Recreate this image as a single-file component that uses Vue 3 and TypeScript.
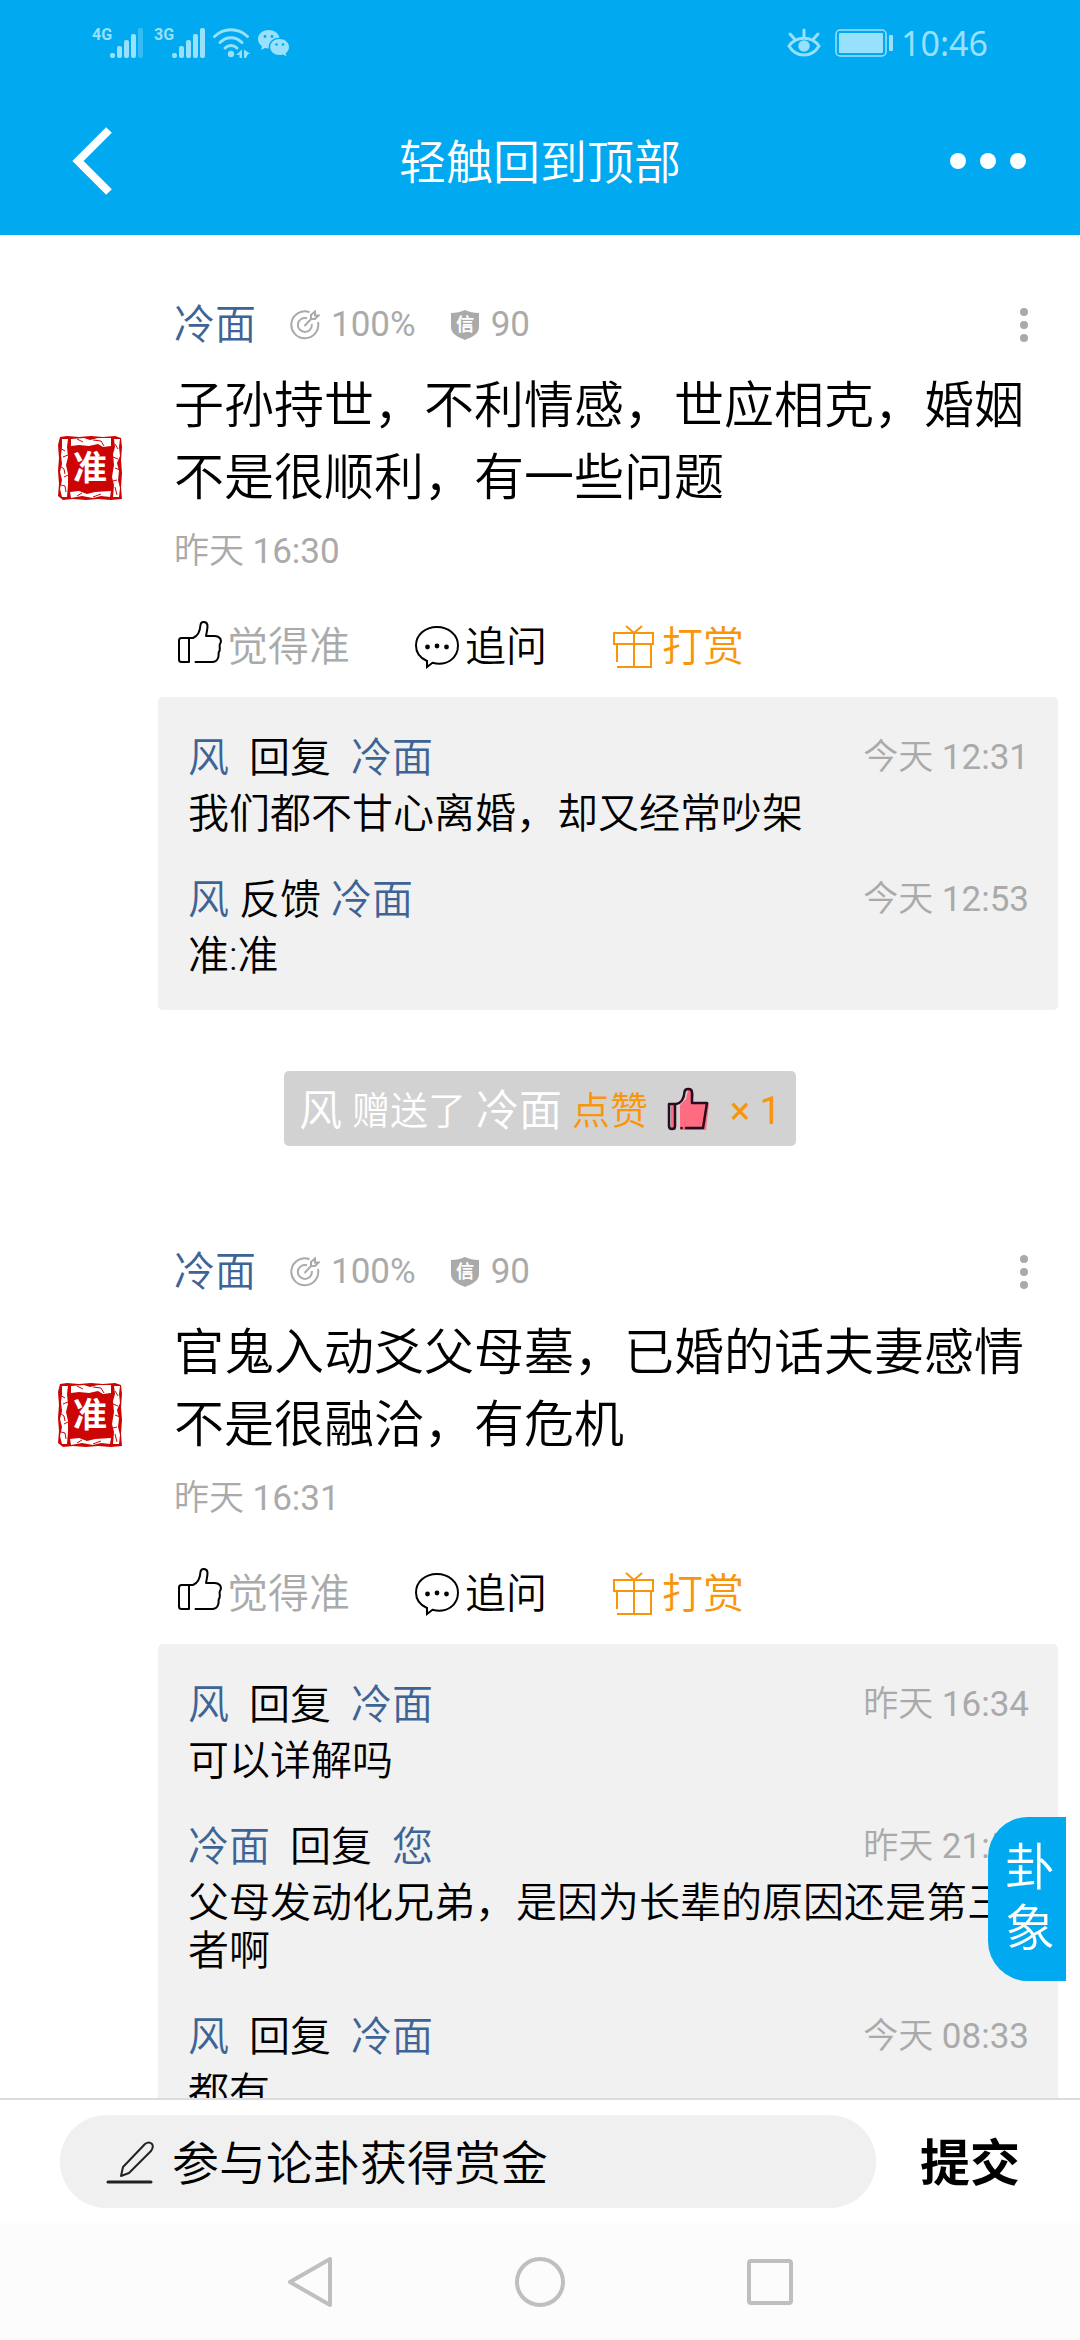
<script setup lang="ts">
import { ref } from 'vue'

interface Moment {
  day: string
  clock: string
}

interface Reply {
  from: string
  verb: string
  to: string
  time: Moment
  text: string
  tight?: boolean
}

interface Post {
  id: number
  author: string
  accuracy: string
  credit: number
  body: string
  time: Moment
  replies: Reply[]
  gift?: { from: string; to: string; name: string; count: number }
}

const today = (clock: string): Moment => ({ day: '今天', clock })
const yesterday = (clock: string): Moment => ({ day: '昨天', clock })

const posts: Post[] = [
  {
    id: 1,
    author: '冷面',
    accuracy: '100%',
    credit: 90,
    body: '子孙持世，不利情感，世应相克，婚姻不是很顺利，有一些问题',
    time: yesterday('16:30'),
    replies: [
      { from: '风', verb: '回复', to: '冷面', time: today('12:31'), text: '我们都不甘心离婚，却又经常吵架' },
      { from: '风', verb: '反馈', to: '冷面', time: today('12:53'), text: '准:准', tight: true },
    ],
    gift: { from: '风', to: '冷面', name: '点赞', count: 1 },
  },
  {
    id: 2,
    author: '冷面',
    accuracy: '100%',
    credit: 90,
    body: '官鬼入动爻父母墓，已婚的话夫妻感情不是很融洽，有危机',
    time: yesterday('16:31'),
    replies: [
      { from: '风', verb: '回复', to: '冷面', time: yesterday('16:34'), text: '可以详解吗' },
      { from: '冷面', verb: '回复', to: '您', time: yesterday('21:54'), text: '父母发动化兄弟，是因为长辈的原因还是第三者啊' },
      { from: '风', verb: '回复', to: '冷面', time: today('08:33'), text: '都有' },
    ],
  },
]

const draft = ref('')
const feed = ref<HTMLElement | null>(null)

function backToTop() {
  feed.value?.scrollTo({ top: 0, behavior: 'smooth' })
}
</script>

<template>
  <div class="app">
    <header class="top">
      <div class="status">
        <div class="status-left">
          <span class="net">4G</span>
          <svg class="bars" width="34" height="32" viewBox="0 0 34 32" aria-hidden="true">
            <rect x="0" y="26" width="5" height="5" rx="2" />
            <rect x="7" y="19" width="5" height="12" rx="2" />
            <rect x="14" y="13" width="5" height="18" rx="2" />
            <rect x="21" y="7" width="5" height="24" rx="2" />
            <rect x="28" y="1" width="5" height="30" rx="2" opacity=".35" />
          </svg>
          <span class="net second">3G</span>
          <svg class="bars" width="34" height="32" viewBox="0 0 34 32" aria-hidden="true">
            <rect x="0" y="26" width="5" height="5" rx="2" />
            <rect x="7" y="19" width="5" height="12" rx="2" />
            <rect x="14" y="13" width="5" height="18" rx="2" />
            <rect x="21" y="7" width="5" height="24" rx="2" />
            <rect x="28" y="1" width="5" height="30" rx="2" />
          </svg>
          <svg class="wifi" width="40" height="32" viewBox="0 0 40 32" aria-hidden="true">
            <g fill="none" stroke="currentColor" stroke-width="3" stroke-linecap="round">
              <path d="M2.500 9.500C12 .5 26 .5 35.500 9.500" />
              <path d="M8 15.500C14.500 9 23.500 9 30 15.500" />
              <path d="M13 21C16.500 17.500 21.500 17.500 25 21" />
            </g>
            <circle cx="19" cy="27" r="3.200" />
            <path d="M30 22.500v8.500h-2.500v-3h-3.500zM32 22.500l6.500 4.500h-2.500l-2 4H32z" />
          </svg>
          <svg class="wechat" width="33" height="28" viewBox="0 0 33 28" aria-hidden="true">
            <path d="M11.500 1C5.500 1 1 5 1 10c0 3 1.500 5.500 4 7.200L4 21l4-2c1.200.3 2.500.5 3.800.5C11 13 16 8.500 22.500 8.700 21.500 4 17 1 11.500 1z" />
            <path d="M22.500 10c-5.300 0-9.300 3.500-9.300 8s4 8 9.300 8c1.200 0 2.400-.2 3.500-.6l3.500 1.800-.9-3c2.200-1.500 3.400-3.700 3.400-6.200 0-4.500-4.200-8-9.500-8z" />
            <g fill="#00a9f0">
              <circle cx="8" cy="7.500" r="1.400" /><circle cx="15" cy="7.500" r="1.400" />
              <circle cx="19.500" cy="15.500" r="1.300" /><circle cx="26" cy="15.500" r="1.300" />
            </g>
          </svg>
        </div>
        <div class="status-right">
          <svg width="34" height="32" viewBox="0 0 34 32" aria-hidden="true">
            <g fill="none" stroke="currentColor" stroke-width="3" stroke-linecap="round">
              <path d="M2 19C9 8.500 25 8.500 32 19 25 31 9 31 2 19z" />
              <path d="M17 10V3M7.500 12 3 7M26.500 12 31 7" />
            </g>
            <circle cx="17" cy="19" r="5.800" />
          </svg>
          <svg class="battery" width="58" height="28" viewBox="0 0 58 28" aria-hidden="true">
            <rect x="1" y="1" width="50" height="26" rx="4" fill="none" stroke="currentColor" stroke-width="1.500" />
            <rect x="4" y="4" width="44" height="20" rx="1" />
            <rect x="54" y="6" width="4" height="16" rx="1" />
          </svg>
          <span class="clock">10:46</span>
        </div>
      </div>
      <nav class="titlebar">
        <button class="plain" type="button" aria-label="返回">
          <svg width="42" height="68" viewBox="0 0 42 68" aria-hidden="true">
            <path d="M37 3 6 34 37 65" fill="none" stroke="#fff" stroke-width="8" />
          </svg>
        </button>
        <button class="plain title" type="button" @click="backToTop">轻触回到顶部</button>
        <button class="plain end" type="button" aria-label="更多">
          <svg width="78" height="18" viewBox="0 0 78 18" fill="#fff" aria-hidden="true">
            <circle cx="9" cy="9" r="8" /><circle cx="39" cy="9" r="8" /><circle cx="69" cy="9" r="8" />
          </svg>
        </button>
      </nav>
    </header>

    <div class="stage">
      <main ref="feed" class="feed">
        <article v-for="post in posts" :key="post.id" class="post">
          <div class="entry">
            <svg class="seal" width="66" height="66" viewBox="0 0 66 66" aria-hidden="true">
              <path fill="#cc0404" d="M3 2 10 1 22 2 34 1 46 2 58 1 64 3 65 12 64 25 65 38 64 52 65 64 54 65 41 64 29 65 16 64 6 65 1 61 2 49 1 36 2 23 1 10z" />
              <g fill="#fff">
                <path d="M14 4 27 3 33 5 41 3 54 3 54 11 46 12 41 9 32 11 22 10 14 11z" />
                <path d="M13 57 22 56 30 59 38 57 54 56 53 62 44 61 36 63 25 61 14 63z" />
                <path d="M5 4 11 4 10 12 11 22 9 30 11 39 11 50 10 62 5 62 3 54 5 45 3 37 5 29 4 20 5 12z" />
                <path d="M57 4 63 4 62 12 63 21 60 28 62 36 61 45 63 53 62 62 56 62 57 50 55 42 57 30 56 19 58 12z" />
              </g>
              <g fill="none" stroke="#cc0404" stroke-width="1">
                <path d="M3 13l5 3M6 22l5-2M3 31l4 3 1 5M7 42l4-2M4 50l4 1 1 6M58 9l3 5M56 22l5 2M58 33l5 2M56 46l4-1M58 52l2 8M20 4l6 3M36 5l8 1 3 5M20 61l5-3M36 62l8-3" />
              </g>
              <text x="33" y="45" text-anchor="middle" class="seal-char">准</text>
            </svg>
            <div class="content">
              <div class="meta">
                <a class="name" href="#">{{ post.author }}</a>
                <span class="stat">
                  <svg width="30" height="30" viewBox="0 0 30 30" fill="none" stroke="currentColor" stroke-width="2" aria-hidden="true">
                    <path d="M19.500 2.200A13.500 13.500 0 1 0 28 12" />
                    <path d="M17 8.300A7 7 0 1 0 21.800 14" />
                    <path d="M14.500 16 22 8M21 9V5l4-3.500V5.500H28.500L25 9z" />
                  </svg>
                  {{ post.accuracy }}
                </span>
                <span class="stat">
                  <svg width="30" height="30" viewBox="0 0 30 30" aria-hidden="true">
                    <path fill="currentColor" d="M1 3C6 3 11 2 15 0c4 2 9 3 14 3v14c0 7-7 10-14 13C8 27 1 24 1 17z" />
                    <text x="15" y="21" text-anchor="middle" class="shield-char">信</text>
                  </svg>
                  {{ post.credit }}
                </span>
                <button class="plain more" type="button" aria-label="更多操作">
                  <svg width="8" height="34" viewBox="0 0 8 34" fill="#aaa" aria-hidden="true">
                    <circle cx="4" cy="4" r="4" /><circle cx="4" cy="17" r="4" /><circle cx="4" cy="30" r="4" />
                  </svg>
                </button>
              </div>
              <p class="body">{{ post.body }}</p>
              <time class="time">{{ post.time.day }} <span>{{ post.time.clock }}</span></time>
              <div class="actions">
                <button class="plain act muted" type="button">
                  <svg width="46" height="54" viewBox="0 0 46 54" fill="none" stroke="#000" stroke-width="2" stroke-linecap="round" stroke-linejoin="round" aria-hidden="true">
                    <path d="M13 18H5.500Q3 18 3 20.500V39.500Q3 42 5.500 42H13z" />
                    <path d="M13 18H17C22 16 24 12 24.500 5 25 .5 31.500 1 31.500 6 31.500 10 30.500 13 30 16H38.500C43 16 46 19 44.500 23 42.500 25 44.500 27 43.500 31 41.500 33 43.500 35 42 38 41 41 38.500 42 36 42H19.500" />
                  </svg>
                  觉得准
                </button>
                <button class="plain act" type="button">
                  <svg width="46" height="44" viewBox="0 0 46 44" aria-hidden="true">
                    <path d="M13 36V42L18.500 37.800C33 41.500 44 33 44 20.500 44 10 34.500 2 23 2 11 2 2 10 2 20.500 2 27.500 6 33 13 36z" fill="none" stroke="#000" stroke-width="2" />
                    <circle cx="13.500" cy="22" r="2.400" /><circle cx="23" cy="21" r="2.400" /><circle cx="32.500" cy="22" r="2.400" />
                  </svg>
                  追问
                </button>
                <button class="plain act reward" type="button">
                  <svg width="46" height="44" viewBox="0 0 46 44" fill="none" stroke="currentColor" stroke-width="2" aria-hidden="true">
                    <path d="M3 8H42V19H3zM6 19V37M6 42H40V19M23 8V42M15 1l8 7 8-7" />
                  </svg>
                  打赏
                </button>
              </div>
            </div>
          </div>

          <section class="replies">
            <div v-for="(reply, i) in post.replies" :key="i" class="reply">
              <div class="reply-head">
                <span class="who" :class="{ tight: reply.tight }">
                  <a href="#">{{ reply.from }}</a>
                  <span>{{ reply.verb }}</span>
                  <a href="#">{{ reply.to }}</a>
                </span>
                <time class="reply-time">{{ reply.time.day }} <span>{{ reply.time.clock }}</span></time>
              </div>
              <p class="reply-text">{{ reply.text }}</p>
            </div>
          </section>

          <div v-if="post.gift" class="gift">
            <strong>{{ post.gift.from }}</strong>
            <span>赠送了</span>
            <strong>{{ post.gift.to }}</strong>
            <em>{{ post.gift.name }}</em>
            <svg class="gift-thumb" width="44" height="44" viewBox="0 0 44 44" aria-hidden="true">
              <path fill="#ff6b81" d="M14 18 20 12 22 3 26 2 28 8 26 16H43L40 43H14zM5 17h5v26H5z" />
              <g fill="none" stroke="#280c20" stroke-width="2.500" stroke-linejoin="round" stroke-linecap="round">
                <path d="M3 17H9V39Q9 42 6 42 3 42 3 39z" />
                <path d="M10 17C16 16 18 12 18.500 5 19 1 26 1 26 5.500V16H41L37 41H20M15.500 41h.1" />
              </g>
            </svg>
            <em class="count">× {{ post.gift.count }}</em>
          </div>
        </article>
      </main>
      <button class="plain chart" type="button"><span>卦</span><span>象</span></button>
    </div>

    <form class="composer" @submit.prevent="draft = ''">
      <label class="field">
        <svg width="48" height="44" viewBox="0 0 48 44" fill="none" stroke="#222" stroke-width="2" stroke-linecap="round" aria-hidden="true">
          <path d="M15 36 17 27 39 4Q43 1 46 4 48 7 45 11L23 33z" stroke-linejoin="round" />
          <path d="M2 42H45" stroke-width="3" />
        </svg>
        <input v-model="draft" type="text" placeholder="参与论卦获得赏金" aria-label="参与论卦获得赏金" />
      </label>
      <button class="plain submit" type="submit">提交</button>
    </form>

    <nav class="system">
      <button class="plain" type="button" aria-label="后退">
        <svg width="50" height="54" viewBox="0 0 50 54" aria-hidden="true"><path d="M45 4V50L5 27z" /></svg>
      </button>
      <button class="plain" type="button" aria-label="主页">
        <svg width="54" height="54" viewBox="0 0 54 54" aria-hidden="true"><circle cx="27" cy="27" r="23" /></svg>
      </button>
      <button class="plain" type="button" aria-label="最近任务">
        <svg width="50" height="50" viewBox="0 0 50 50" aria-hidden="true"><rect x="4" y="4" width="42" height="42" rx="2" /></svg>
      </button>
    </nav>
  </div>
</template>

<style>
body {
  margin: 0;
  background: #fff;
}
</style>

<style scoped>
.app {
  display: flex;
  flex-direction: column;
  height: 100vh;
  font-family: Roboto, "Noto Sans CJK SC", sans-serif;
  font-size: 41px;
  font-weight: 350;
  line-height: 48px;
  color: #000;
}

.plain {
  display: flex;
  align-items: center;
  padding: 0;
  border: 0;
  background: none;
  font: inherit;
  color: inherit;
}

svg {
  display: block;
  flex: none;
}

a {
  color: #3e6496;
  text-decoration: none;
}

p {
  margin: 0;
}

.top {
  background: #00a9f0;
}

.status {
  display: flex;
  justify-content: space-between;
  align-items: center;
  height: 86px;
  padding: 0 92px;
  color: #98e0fb;
}

.status svg {
  fill: currentColor;
}

.status-left,
.status-right {
  display: flex;
  align-items: center;
}

.battery {
  margin: 0 8px 0 14px;
}

.net {
  align-self: flex-start;
  width: 18px;
  font-size: 16px;
  font-weight: 700;
  line-height: 16px;
}

.second {
  margin-left: 10px;
}

.wifi {
  margin-left: 6px;
}

.wechat {
  margin-left: 5px;
}

.clock {
  font-family: "Noto Sans", sans-serif;
  font-size: 34px;
  font-weight: 400;
}

.titlebar {
  display: grid;
  grid-template-columns: 1fr auto 1fr;
  align-items: center;
  height: 149px;
  padding: 0 53px 0 72px;
}

.title {
  margin-right: 19px;
  padding-top: 4px;
  font-size: 47px;
  color: #fff;
}

.end {
  justify-self: end;
}

.stage {
  position: relative;
  flex: 1;
  min-height: 0;
}

.feed {
  height: 100%;
  overflow-y: auto;
  scrollbar-width: none;
}

.post {
  padding-top: 30px;
}

.entry {
  display: flex;
  align-items: center;
  padding: 0 32px 0 57px;
}

.seal-char {
  font: 700 34px "Noto Sans CJK SC", sans-serif;
  fill: #fff;
}

.content {
  flex: 1;
  margin-left: 51px;
  padding-top: 36px;
}

.meta {
  display: flex;
  align-items: center;
}

.stat {
  display: flex;
  align-items: center;
  gap: 11px;
  margin-left: 34px;
  font-size: 35px;
  font-weight: 400;
  color: #aaa;
}

.shield-char {
  font: 700 18px "Noto Sans CJK SC", sans-serif;
  fill: #fff;
}

.more {
  margin-left: auto;
  margin-right: 20px;
}

.body {
  margin-top: 21px;
  font-size: 50px;
  line-height: 72px;
}

.time,
.reply-time {
  display: block;
  font-size: 35px;
  color: #aaa;
}

.time {
  margin-top: 14px;
}

.time span,
.reply-time span {
  font-weight: 400;
}

.actions {
  display: flex;
  align-items: center;
  gap: 64px;
  height: 48px;
  margin-top: 47px;
  padding-left: 2px;
}

.act {
  gap: 5px;
  white-space: nowrap;
}

.muted {
  color: #aaa;
}

.reward {
  color: #f9950a;
}

.replies {
  display: flex;
  flex-direction: column;
  gap: 38px;
  margin: 26px 22px 0 158px;
  padding: 37px 29px 30px 30px;
  border-radius: 5px;
  background: #f1f1f1;
}

.reply-head {
  display: flex;
  justify-content: space-between;
  align-items: center;
  margin-bottom: 8px;
}

.who {
  display: flex;
  gap: 20px;
}

.who.tight {
  gap: 10px;
}

.gift {
  display: flex;
  align-items: center;
  gap: 10px;
  box-sizing: border-box;
  width: fit-content;
  height: 75px;
  margin: 61px auto 36px;
  padding: 4px 15px 0;
  border-radius: 5px;
  background: #d2d2d2;
  font-size: 38px;
  color: #fff;
}

.gift strong {
  font-size: 43px;
  font-weight: inherit;
}

.gift em {
  font-style: normal;
  color: #f9950a;
}

.gift-thumb {
  margin: 0 0 4px 8px;
}

.gift .count {
  margin-left: 10px;
  font-weight: 400;
}

.chart {
  position: absolute;
  right: 14px;
  bottom: 117px;
  flex-direction: column;
  justify-content: center;
  width: 78px;
  height: 164px;
  padding-left: 6px;
  border-radius: 40px 0 0 40px;
  background: #00a9f0;
  font-size: 50px;
  line-height: 61px;
  color: #fff;
}

.composer {
  display: flex;
  align-items: center;
  gap: 44px;
  padding: 15px 60px;
  border-top: 2px solid #dcdcdc;
  background: #fff;
}

.field {
  display: flex;
  flex: 1;
  align-items: center;
  gap: 18px;
  min-width: 0;
  height: 93px;
  padding: 0 46px;
  border-radius: 47px;
  background: #f0f0f0;
}

.field input {
  flex: 1;
  min-width: 0;
  padding: 4px 0 0;
  border: 0;
  outline: 0;
  background: none;
  font: inherit;
  font-size: 47px;
  line-height: 60px;
  color: #000;
}

.field input::placeholder {
  color: #000;
  opacity: 1;
}

.submit {
  padding-top: 4px;
  font-size: 50px;
  font-weight: 700;
}

.system {
  display: flex;
  justify-content: center;
  align-items: center;
  gap: 178px;
  height: 117px;
  background: #fcfcfc;
}

.system svg {
  fill: none;
  stroke: #bfbfbf;
  stroke-width: 4;
  stroke-linejoin: round;
}
</style>
